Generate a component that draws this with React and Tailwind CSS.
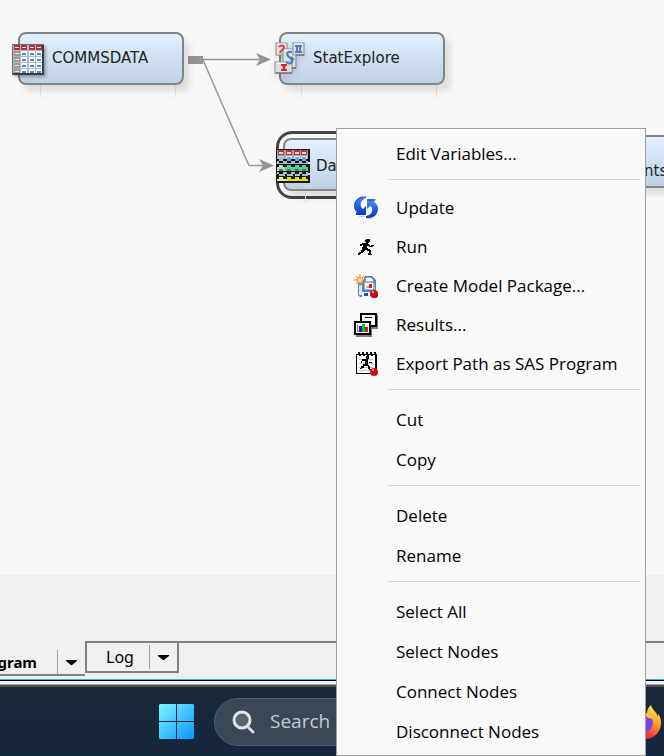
import React from 'react';

const PixelIcon = ({ rows, colors, className }) => (
  <svg className={className} viewBox={`0 0 ${rows[0].length} ${rows.length}`} shapeRendering="crispEdges" aria-hidden="true">
    {rows.map((row, y) =>
      [...row].map((c, x) => (colors[c] ? <rect key={`${x}-${y}`} x={x} y={y} width="1" height="1" fill={colors[c]} /> : null))
    )}
  </svg>
);

const RUNNER = [
  '........xxxx....',
  '.......xxxxx....',
  '.......xxxxx....',
  '........xxx.....',
  '....xxxxxx......',
  '..xxxxxxxxx.....',
  '..xx.xxxxxxx.xxx',
  '.....xxxx..xxxx.',
  '....xxxxx.......',
  '....xxxxxx......',
  '....xxxxxxxx....',
  '...xxxx..xxxx...',
  '...xxx.....xx...',
  '.xxxx......xx...',
  'xxx.......xxx...',
  'xx........xxxx..',
];

const UpdateIcon = () => (
  <svg className="h-6 w-6" viewBox="0 0 24 24" aria-hidden="true">
    <defs>
      <linearGradient id="upd" x1="0" y1="0" x2="0" y2="1">
        <stop offset="0" stopColor="#4c8fee" />
        <stop offset="1" stopColor="#0438bc" />
      </linearGradient>
    </defs>
    <path d="M13 22h6v1h-6zM5 20h6v1H5z" fill="#cfcfcf" />
    <path d="M12 0C5 0 0 4 0 10c0 3 1 5 3 6l-1 1v2h10v-9L9 13C7 12 6 9 7 6c1-2 3-3 5-4z" fill="url(#upd)" />
    <path d="M13 3h9l-2 3c3 2 4 4 4 7 0 5-4 9-9 9h-3v-2c5-1 7-4 6-8 0-1-1-2-2-2l-3 3z" fill="url(#upd)" />
    <path d="M1 8c1-4 4-6 8-7M14 4h6" stroke="#1747b0" fill="none" />
  </svg>
);

const RunIcon = () => <PixelIcon className="h-4 w-4" rows={RUNNER} colors={{ x: '#000000' }} />;

const PackageIcon = () => (
  <svg className="h-6 w-6" viewBox="0 0 24 24" aria-hidden="true">
    <path d="M4 7h5l2-5h7l4 4v17H6l-2-2z" fill="#5286d6" />
    <path d="M11 3h6l3 3v3h-9z" fill="#fff" stroke="#2d63c0" />
    <path d="M5 11h3v10H5zM20 9h1v12h-1z" fill="#d8e6fc" />
    <path d="M10 8h10v8H10z" fill="#fff" stroke="#3a6fc9" />
    <path d="M12 12h3v2h-3z" fill="#f4b72b" />
    <path d="M15 10h3v4h-3z" fill="#dd1c1c" />
    <path d="M8 18h9v5H8z" fill="#eef4ff" />
    <path d="M10 19h4v3h-4z" fill="#2454ad" />
    <path d="M6 0v12M0 6h12M2 2l8 8M10 2l-8 8" stroke="#ed8a1c" strokeWidth="1" />
    <circle cx="6" cy="6" r="3" fill="#ffd58a" stroke="#f2992e" />
    <circle cx="20" cy="20" r="4" fill="#cc0d0d" />
    <path d="M18 17h2v2h-2z" fill="#ff8c7a" />
    <path d="M19 23h4v-3" stroke="#700" fill="none" />
  </svg>
);

const ResultsIcon = () => (
  <svg className="h-6 w-6" viewBox="0 0 24 24" shapeRendering="crispEdges" aria-hidden="true">
    <path d="M8 2h16v14H8zM2 10h16v14H2z" fill="#7d7d7d" />
    <path d="M6 0h17v14H6z" fill="#000" />
    <path d="M8 2h13v10H8z" fill="#fff" />
    <path d="M11 4h7v1h-7z" fill="#000" />
    <path d="M0 8h17v14H0z" fill="#000" />
    <path d="M2 10h13v10H2z" fill="#fff" />
    <path d="M3 12h1v7H3zM3 18h11v1H3z" fill="#777" />
    <path d="M5 13h3v6H5z" fill="#0818f0" />
    <path d="M8 11h3v8H8z" fill="#00c92b" />
    <path d="M11 14h3v5h-3z" fill="#e31515" />
  </svg>
);

const ExportIcon = () => (
  <svg className="h-6 w-6" viewBox="0 0 24 24" shapeRendering="crispEdges" aria-hidden="true">
    <path d="M2 2h21v20H2z" fill="#000" />
    <path d="M3 3h18v18H3z" fill="#fff" />
    <path d="M4 0h2v2H4zM5 2h2v2H5zM8 0h2v2H8zM9 2h2v2H9zM12 0h2v2h-2zM13 2h2v2h-2zM16 0h2v2h-2zM17 2h2v2h-2zM20 0h2v2h-2z" fill="#000" />
    <path d="M5 7h14v1H5zM5 11h14v1H5zM5 15h14v1H5zM5 18h12v1H5z" fill="#c4c4c4" />
    <path d="M12 4h3v3h-3zM8 7h6v2H8zM7 9h1v2H7zM11 9h3v4h-3zM15 10h3v1h-3zM9 12h4v2H9zM7 14h3v2H7zM6 16h2v1H6zM13 13h2v1h-2zM14 14h2v3h-2zM15 17h2v1h-2z" fill="#000" />
    <circle cx="20" cy="20" r="4" fill="#cc0d0d" shapeRendering="auto" />
    <path d="M18 17h2v2h-2z" fill="#ff8c7a" />
  </svg>
);

const TableIcon = () => (
  <svg className="h-[31px] w-8" viewBox="0 0 32 31" shapeRendering="crispEdges" aria-hidden="true">
    <path d="M0 0h32v31H0z" fill="#6d6d6d" />
    <path d="M30 1h2v30H1v-2h29z" fill="#3c3c3c" />
    <path d="M1 1h29v28H1z" fill="#b8b8b8" />
    {[2, 9, 17, 24].map((x) => (
      <g key={x}>
        <rect x={x} y="1" width="6" height="5" fill="#a93438" />
        <rect x={x + 1} y="3" width="4" height="1" fill="#f3dcdc" />
        {[7, 13, 19, 25].map((y) => (
          <g key={y}>
            <rect x={x} y={y} width="6" height={y === 25 ? 4 : 5} fill={x === 2 ? '#989898' : '#fff'} />
            <rect x={x + 1} y={y + 2} width="4" height={x === 2 ? 1 : 2} fill={x === 2 ? '#f0f0f0' : '#3a8df5'} />
          </g>
        ))}
      </g>
    ))}
  </svg>
);

const StatIcon = () => (
  <svg className="h-8 w-[31px]" viewBox="0 0 31 32" aria-hidden="true">
    <g stroke="#8c8c8c" fill="#dedede">
      <rect x="2" y="1" width="11" height="12" />
      <rect x="9" y="7" width="13" height="19" />
      <rect x="19" y="1" width="11" height="12" />
      <rect x="1" y="20" width="17" height="11" />
    </g>
    <path d="M14 13h1M3 2h9M10 8h8M20 2h9M2 21h15" stroke="#fff" />
    <path d="M5 5c1-2 5-2 5 0 0 3-3 2-4 6" stroke="#d4474a" strokeWidth="2" fill="none" />
    <path d="M21 4h7M21 10h7M23 4v6M26 4v6" stroke="#4a79d6" strokeWidth="2" />
    <path d="M18 10c-4-1-6 1-4 4 2 2 5 3 4 6-1 2-4 2-6 0M17 15l3 3" stroke="#4a79d6" strokeWidth="2" fill="none" />
    <path d="M7 23h6M7 28h6" stroke="#d2262c" strokeWidth="2" />
    <path d="M8 23h4l-1 3 1 2H8l1-2z" fill="#d2262c" />
    <path d="M18 31h-16M22 26h-4M30 13h-8" stroke="#5f5f5f" fill="none" />
  </svg>
);

const PartitionIcon = () => (
  <svg className="h-[34px] w-[34px]" viewBox="0 0 34 34" shapeRendering="crispEdges" aria-hidden="true">
    <path d="M0 0h34v13H0zM0 15h34v9H0zM0 26h34v8H0z" fill="#161616" />
    <path d="M1 12h31v3H1zM1 23h31v4H1z" fill="#a9bdd0" />
    {[2, 10, 18, 25].map((x) => (
      <g key={x}>
        <rect x={x - 1} y="1" width="8" height="11" fill="#a5a5a5" />
        <rect x={x} y="1" width="6" height="5" fill="#b23a3f" />
        <rect x={x + 1} y="3" width="4" height="2" fill="#f0d5d5" />
        <rect x={x} y="7" width="6" height="4" fill={x === 2 ? '#b5cfe8' : '#dcecff'} />
        <rect x={x + 1} y="8" width="4" height="4" fill={x === 2 ? '#9fc3e8' : '#64a5ec'} />
        <path d={`M${x - 1} 10h2v2h-2zM${x + 1} 12h4v2h-4zM${x + 5} 10h2v2h-2z`} fill="#161616" />
        <path d={`M${x - 1} 18h2v-2h4v2h2v4h-2v-2h-4v2h-2z`} fill={x === 2 ? '#b4dcc6' : '#5cc892'} />
        <path d={`M${x + 1} 20h4v2h-4z`} fill="#2d8a5c" />
        <path d={`M${x - 1} 25h2v2h-2zM${x + 1} 23h4v2h-4z`} fill="#161616" />
        <path d={`M${x - 1} 30h2v-2h4v2h2v2h-8z`} fill={x === 2 ? '#eeeaa0' : '#e8e010'} />
      </g>
    ))}
    <path d="M0 0h34v1H0zM0 0h1v13H0zM33 0h1v13h-1zM0 15h1v9H0zM33 15h1v9h-1z" fill="#161616" />
  </svg>
);

const FirefoxIcon = () => (
  <svg className="h-9 w-9" viewBox="0 0 36 36" aria-hidden="true">
    <defs>
      <linearGradient id="fox" x1="0.8" y1="0" x2="0.3" y2="1">
        <stop offset="0" stopColor="#fff44f" />
        <stop offset="0.45" stopColor="#ff9a1f" />
        <stop offset="0.75" stopColor="#ff3647" />
        <stop offset="1" stopColor="#e31587" />
      </linearGradient>
    </defs>
    <path d="M24 1c-3 3-4 5-4 8C10 7 2 12 2 20c0 9 7 15 16 15s16-7 16-16c0-4-1-7-3-9v3c-1-5-6-7-7-12z" fill="url(#fox)" />
    <circle cx="17" cy="19" r="9" fill="#7c3ff0" />
    <path d="M17 10c5 0 8 2 10 5l-6-1z" fill="#ffc12e" />
  </svg>
);

const WindowsLogo = () => (
  <svg className="h-[35px] w-[35px]" viewBox="0 0 35 35" aria-hidden="true">
    <defs>
      <linearGradient id="win" x1="0" y1="0" x2="35" y2="35" gradientUnits="userSpaceOnUse">
        <stop offset="0" stopColor="#7ef5ff" />
        <stop offset="1" stopColor="#0795ff" />
      </linearGradient>
    </defs>
    <path d="M1 0h16v17H0V1zM18 0h16l1 1v16H18zM0 18h17v17H1l-1-1zM18 18h17v16l-1 1H18z" fill="url(#win)" />
  </svg>
);

const menuGroups = [
  [{ label: 'Edit Variables...' }],
  [
    { label: 'Update', icon: UpdateIcon },
    { label: 'Run', icon: RunIcon },
    { label: 'Create Model Package...', icon: PackageIcon },
    { label: 'Results...', icon: ResultsIcon },
    { label: 'Export Path as SAS Program', icon: ExportIcon },
  ],
  [{ label: 'Cut' }, { label: 'Copy' }],
  [{ label: 'Delete' }, { label: 'Rename' }],
  [{ label: 'Select All' }, { label: 'Select Nodes' }, { label: 'Connect Nodes' }, { label: 'Disconnect Nodes' }],
];

const ContextMenu = () => (
  <div role="menu" className="absolute top-32 left-[336px] z-20 w-[310px] border border-[#a0a0a0] bg-[#f9f9f9] pt-1.5 pb-0.5 font-['Open_Sans','Noto_Sans',sans-serif] text-[17px] text-black">
    {menuGroups.map((group, i) => (
      <div key={i} className={i === 0 ? '' : i === 1 ? 'mt-1 pb-px' : 'mt-1'}>
        {i > 0 && <hr className={`mr-[5px] ml-[51px] border-[#d5d5d5] ${i === 1 ? 'mb-[9px]' : 'mb-[11px]'}`} />}
        {group.map(({ label, icon: Icon }) => (
          <button key={label} role="menuitem" className={`flex w-full items-center pb-0.5 text-left whitespace-nowrap hover:bg-[#e5f1fb] ${Icon ? 'h-[39px]' : 'h-10'}`}>
            <span className="mr-0.5 flex w-[57px] shrink-0 justify-center">{Icon && <Icon />}</span>
            {label}
          </button>
        ))}
      </div>
    ))}
  </div>
);

const NodeBox = ({ label, icon, className, labelClass = 'pl-8' }) => (
  <div className={`absolute h-[53px] w-[166px] ${className}`}>
    <div className="absolute top-full left-[22px] h-3 w-[136px] border-x border-[#e2e2e2]" />
    <div className={`relative flex h-full items-center rounded-lg border-2 border-[#828384] bg-linear-to-b from-[#e2f0ff] to-[#bfd1e4] font-['DejaVu_Sans',sans-serif] text-[15px] text-[#222222] shadow-[6px_7px_6px_rgba(0,0,0,0.1)] ${labelClass}`}>
      {label}
    </div>
    {icon}
  </div>
);

const Canvas = () => (
  <section className="relative h-[573px] overflow-hidden bg-[#f8f8f8]">
    <svg className="absolute top-0 left-0 h-[200px] w-[336px]" viewBox="0 0 336 200" aria-hidden="true">
      <path d="M203 59.5h58M203 60l46 105.500h14" stroke="#999" strokeWidth="1.5" fill="none" />
      <path d="M188 56h15v8h-15z" fill="#959595" />
      <path d="M256 53l15 6.500-15 6.500 4-6.500zM259 159l15 6.500-15 6.500 4-6.500z" fill="#949494" />
    </svg>
    <NodeBox label="COMMSDATA" className="top-8 left-[18px]" icon={<div className="absolute top-3 -left-1.5 shadow-[2px_2px_3px_rgba(0,0,0,0.3)]"><TableIcon /></div>} />
    <NodeBox label="StatExplore" className="top-8 left-[279px]" icon={<div className="absolute top-2.5 -left-[5px] drop-shadow-md"><StatIcon /></div>} />
    <div className="absolute top-[131px] left-[276px] h-[68px] w-[181px] rounded-2xl border-3 border-[#444444]" />
    <NodeBox label="Da" className="top-[138px] left-[283px]" labelClass="pl-[31px] pt-1" icon={<div className="absolute top-[11px] -left-[7px]"><PartitionIcon /></div>} />
    <NodeBox label="nts" className="top-[135px] left-[560px]" labelClass="pl-[82px] pt-5" />
  </section>
);

const TabArrow = ({ label }) => (
  <button aria-label={label} className="flex h-6 w-7 shrink-0 items-center justify-center border-l border-[#a0a0a0]">
    <svg className="h-[5px] w-[11px]" viewBox="0 0 11 5" aria-hidden="true">
      <path d="M0 0h11v1L6 5H5L0 1z" fill="#000" />
    </svg>
  </button>
);

const TabBar = () => (
  <div className="flex h-[106px] items-start overflow-hidden border-t border-white bg-[#f0f0f0] pt-[67px] font-['Noto_Sans',sans-serif] text-base text-black">
    <div className="flex h-[35px] w-[85px] shrink-0 items-end justify-end border-b-2 border-[#808080]">
      <button className="mr-5 pb-px text-[15px] font-bold">gram</button>
      <TabArrow label="Diagram options" />
    </div>
    <div className="flex h-8 flex-1 border-t-2 border-l-2 border-[#808080]">
      <div className="flex h-[30px] w-[92px] items-center border-r-2 border-b-2 border-[#808080]">
        <button className="w-[62px] pl-1 text-center">Log</button>
        <TabArrow label="Log options" />
      </div>
    </div>
  </div>
);

const Taskbar = () => (
  <footer>
    <div className="h-px bg-[#33b5d6]" />
    <div className="h-px bg-black" />
    <div className="h-[3px] bg-[#f5f0f4]" />
    <div className="h-px bg-[#a0a0a0]" />
    <div className="h-0.5 bg-[#4a535b]" />
    <div className="flex h-[69px] items-center bg-linear-to-b from-[#1b2937] to-[#15273f] pr-px pl-[159px]">
      <button aria-label="Start" className="mr-5 shrink-0">
        <WindowsLogo />
      </button>
      <label className="flex h-12 min-w-0 flex-1 items-center rounded-full border border-[#526070] bg-[#3a4756] pl-4">
        <svg className="h-6 w-6 shrink-0" viewBox="0 0 24 24" fill="none" aria-hidden="true">
          <circle cx="11" cy="10" r="8" stroke="#e2e5e8" strokeWidth="3" fill="#59636f" />
          <path d="M17 17l5 5" stroke="#d5d8dc" strokeWidth="3" strokeLinecap="round" />
        </svg>
        <input
          type="text"
          aria-label="Search"
          placeholder="Search"
          className="ml-[15px] min-w-0 flex-1 bg-transparent font-['Open_Sans','Noto_Sans',sans-serif] text-[19px] text-white outline-none placeholder:text-[#c5cbd2]"
        />
      </label>
      <button aria-label="Firefox" className="ml-12 shrink-0">
        <FirefoxIcon />
      </button>
    </div>
  </footer>
);

const App = () => (
  <main className="relative min-h-screen overflow-hidden bg-[#15273f]">
    <Canvas />
    <TabBar />
    <Taskbar />
    <ContextMenu />
  </main>
);

export default App;
